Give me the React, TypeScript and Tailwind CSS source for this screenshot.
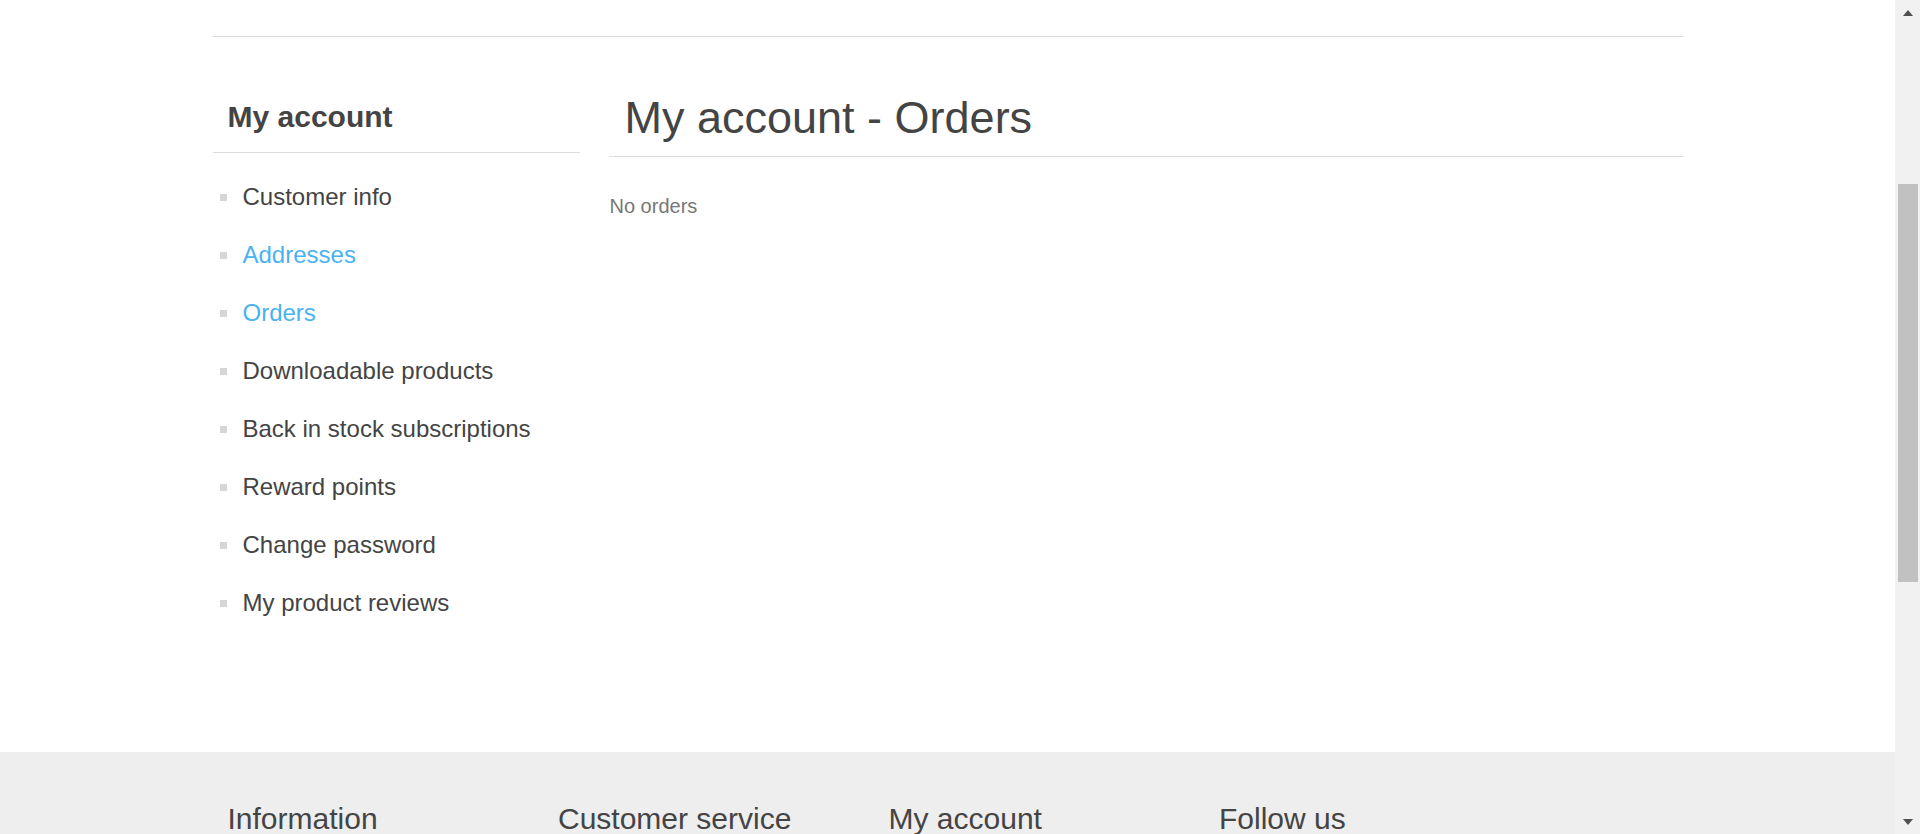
import React from 'react'

const menu = [
  { label: 'Customer info', active: false },
  { label: 'Addresses', active: true },
  { label: 'Orders', active: true },
  { label: 'Downloadable products', active: false },
  { label: 'Back in stock subscriptions', active: false },
  { label: 'Reward points', active: false },
  { label: 'Change password', active: false },
  { label: 'My product reviews', active: false },
]

const footerTitles = ['Information', 'Customer service', 'My account', 'Follow us']

// fake browser scrollbar, the page in the shot is scrolled a bit
function Scrollbar() {
  return (
    <div className="w-[25px] h-full bg-[#f1f1f1] flex flex-col items-center">
      <div className="h-[25px] w-full flex items-center justify-center">
        <svg width="10" height="6" viewBox="0 0 10 6">
          <polygon points="0,6 5,0 10,6" fill="#505050" />
        </svg>
      </div>
      <div className="mt-[159px] h-[398px] w-[20px] bg-[#c1c1c1]" />
      <div className="flex-1" />
      <div className="h-[25px] w-full flex items-center justify-center">
        <svg width="10" height="6" viewBox="0 0 10 6">
          <polygon points="0,0 10,0 5,6" fill="#505050" />
        </svg>
      </div>
    </div>
  )
}

export default function App() {
  return (
    <div className="h-[834px] w-[1920px] overflow-hidden flex bg-white font-['Liberation_Sans',Arial,sans-serif] text-[#444]">
      <div className="w-[1895px] h-full flex flex-col">
        <div className="h-[752px] shrink-0">
          <div className="w-[1470px] mx-auto pt-[36px]">
            <div className="border-t border-[#ddd] flex">
              {/* side column */}
              <div className="w-[367px] shrink-0">
                <div className="pt-[65px] pb-[20px] pl-[15px] border-b border-[#ddd]">
                  <h2 className="text-[30px] leading-[30px] font-bold">My account</h2>
                </div>
                <ul className="mt-[15px]">
                  {menu.map((item) => (
                    <li key={item.label} className="h-[58px] flex items-center">
                      <span className="w-[7px] h-[7px] bg-[#d6d6d6] ml-[7px] mr-[16px] shrink-0" />
                      <a
                        className={
                          item.active
                            ? 'text-[24px] leading-[58px] text-[#4ab2f1]'
                            : 'text-[24px] leading-[58px] text-[#444]'
                        }
                      >
                        {item.label}
                      </a>
                    </li>
                  ))}
                </ul>
              </div>

              {/* center column */}
              <div className="w-[1074px] ml-[29px]">
                <div className="pt-[58px] pb-[16px] pl-[16px] border-b border-[#ddd]">
                  <h1 className="text-[45px] leading-[45px] font-normal">My account - Orders</h1>
                </div>
                <div className="mt-[39px] pl-[1px] text-[20px] leading-[20px] text-[#777]">No orders</div>
              </div>
            </div>
          </div>
        </div>

        <div className="flex-1 bg-[#eee]">
          <div className="w-[1470px] mx-auto flex pt-[52px]">
            {footerTitles.map((t) => (
              <div key={t} className="w-[330.5px] pl-[15px]">
                <h3 className="text-[30px] leading-[30px] font-normal text-[#444]">{t}</h3>
              </div>
            ))}
          </div>
        </div>
      </div>
      <Scrollbar />
    </div>
  )
}
